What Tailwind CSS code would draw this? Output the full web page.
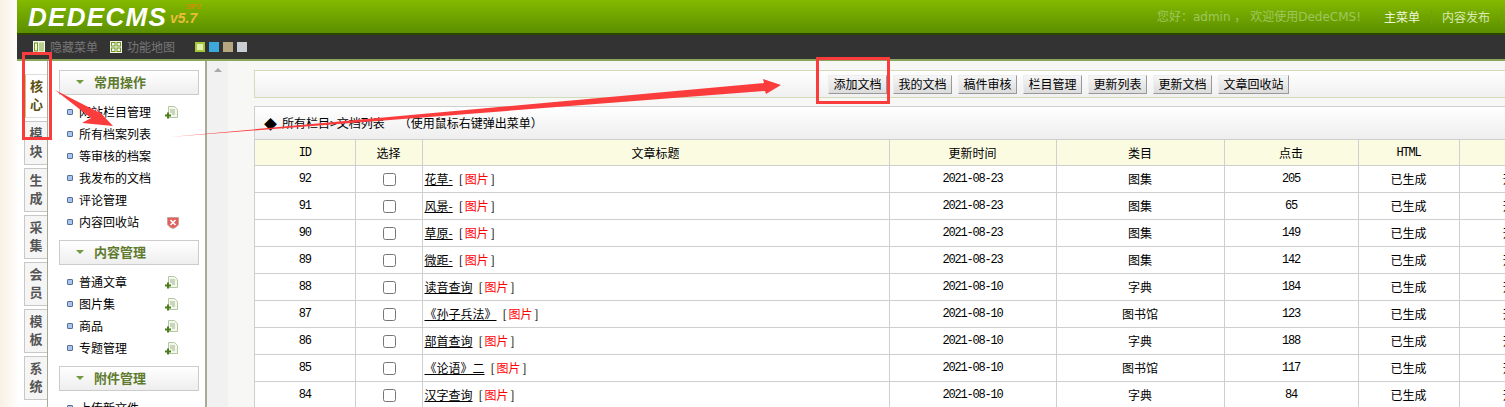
<!DOCTYPE html>
<html lang="zh-CN">
<head>
  <meta charset="UTF-8">
  <title>DedeCMS</title>
  <script src="https://cdn.jsdelivr.net/npm/@tailwindcss/browser@4"></script>
</head>
<body class="m-0 h-[407px] w-[1505px] overflow-hidden bg-white text-[12px] leading-none text-black [font-family:'Noto_Sans_CJK_SC',sans-serif]">
<div class="relative flex h-[407px] w-[1505px] overflow-hidden">

  <!-- left margin of the window -->
  <div class="h-full w-[17px] shrink-0 bg-gradient-to-r from-[#f8f0e4] to-[#fffdfa]"></div>

  <div class="flex h-full w-[1488px] shrink-0 flex-col">
    <!-- top bar -->
    <div class="flex h-[33px] shrink-0 items-center bg-gradient-to-b from-[#84ba00] to-[#5b8f00] pl-[11px]">
      <div class="relative w-[185px] text-white">
        <span class="text-[26px] font-black italic tracking-[1.300px] [font-family:'Liberation_Sans',sans-serif]">DEDECMS</span>
        <span class="absolute left-[142px] top-[7px] text-[14px] font-bold italic text-[#e8bd3a] [font-family:'Liberation_Sans',sans-serif]">v5.7</span>
        <span class="absolute left-[158px] top-[-1px] text-[8px] text-[#f07a10] [font-family:'Liberation_Sans',sans-serif]">SP2</span>
      </div>
      <div class="ml-auto flex items-center">
        <span class="text-[#9fc65e] [font-family:'DejaVu_Sans','Noto_Sans_CJK_SC',sans-serif]">您好：admin ， 欢迎使用DedeCMS!</span>
        <span class="ml-[23px] text-[#eef5dc]">主菜单</span>
        <span class="ml-[11px] h-[14px] w-px bg-[#6f9f1a]"></span>
        <span class="ml-[10px] text-[#dbe9b4]">内容发布</span>
        <span class="ml-[11px] mr-[3px] h-[14px] w-px bg-[#6f9f1a]"></span>
      </div>
    </div>

    <!-- dark menu bar -->
    <div class="flex h-[28px] shrink-0 items-center border-t-2 border-b-2 border-t-[#2c4600] border-b-[#8aa65a] bg-[#333333] pl-[16px] text-[#777777]">
      <svg class="h-[12px] w-[12px]" viewBox="0 0 12 12"><rect width="12" height="12" fill="#f2f2e8"/><rect x="1.5" y="2" width="3" height="8" fill="none" stroke="#6f9a1e"/><rect x="6" y="1.5" width="5" height="9" fill="#b7cf8a"/></svg>
      <span class="ml-[5px]">隐藏菜单</span>
      <svg class="ml-[12px] h-[12px] w-[12px]" viewBox="0 0 12 12"><rect width="12" height="12" fill="#f2f2e8"/><rect x="1.5" y="1.5" width="3.5" height="3.5" fill="none" stroke="#6f9a1e"/><rect x="7" y="1.5" width="3.5" height="3.5" fill="none" stroke="#6f9a1e"/><rect x="1.5" y="7" width="3.5" height="3.5" fill="none" stroke="#6f9a1e"/><rect x="7" y="7" width="3.5" height="3.5" fill="none" stroke="#6f9a1e"/></svg>
      <span class="ml-[5px]">功能地图</span>
      <span class="ml-[20px] h-[10px] w-[10px] border-2 border-[#a4c93a] bg-[#e4efb0]"></span>
      <span class="ml-[4px] h-[10px] w-[10px] bg-[#3da8dc]"></span>
      <span class="ml-[4px] h-[10px] w-[10px] bg-[#b8a680]"></span>
      <span class="ml-[4px] h-[10px] w-[10px] bg-[#c9ced3]"></span>
    </div>

    <div class="flex min-h-0 flex-1">
      <!-- vertical tabs -->
      <div class="flex w-[30px] shrink-0 flex-col items-end gap-[3px] bg-white pt-[13px]" id="tabs"></div>

      <!-- side menu -->
      <div class="h-full w-[160px] shrink-0 overflow-hidden border-r-2 border-l border-r-[#a8ab95] border-l-[#a8ab95] bg-white pl-[11px] pr-[6px] pt-[9px]" id="menu"></div>

      <!-- scroll strip -->
      <div class="flex w-[21px] shrink-0 justify-center bg-[#f1f1f1] pt-[7px]">
        <span class="h-0 w-0 border-x-[4px] border-b-[4px] border-x-transparent border-b-[#a8a8a8]"></span>
      </div>

      <!-- content -->
      <div class="min-w-0 flex-1 overflow-hidden bg-[#f7f8f5] pl-[26px] pt-[9px]">
        <div class="flex h-[28px] items-center gap-[6px] border-y border-l border-[#d3dcb8] bg-gradient-to-b from-white to-[#f0f0f0] pl-[573px]">
          <button class="h-[19px] w-[59px] border border-[#eeeeee] border-r-[#999999] border-b-[#999999] bg-gradient-to-b from-[#f6f6f6] to-[#dcdcdc]">添加文档</button>
          <button class="h-[19px] w-[59px] border border-[#eeeeee] border-r-[#999999] border-b-[#999999] bg-gradient-to-b from-[#f6f6f6] to-[#dcdcdc]">我的文档</button>
          <button class="h-[19px] w-[59px] border border-[#eeeeee] border-r-[#999999] border-b-[#999999] bg-gradient-to-b from-[#f6f6f6] to-[#dcdcdc]">稿件审核</button>
          <button class="h-[19px] w-[59px] border border-[#eeeeee] border-r-[#999999] border-b-[#999999] bg-gradient-to-b from-[#f6f6f6] to-[#dcdcdc]">栏目管理</button>
          <button class="h-[19px] w-[59px] border border-[#eeeeee] border-r-[#999999] border-b-[#999999] bg-gradient-to-b from-[#f6f6f6] to-[#dcdcdc]">更新列表</button>
          <button class="h-[19px] w-[59px] border border-[#eeeeee] border-r-[#999999] border-b-[#999999] bg-gradient-to-b from-[#f6f6f6] to-[#dcdcdc]">更新文档</button>
          <button class="h-[19px] w-[71px] border border-[#eeeeee] border-r-[#999999] border-b-[#999999] bg-gradient-to-b from-[#f6f6f6] to-[#dcdcdc]">文章回收站</button>
        </div>

        <div class="mt-[8px] w-[1340px] border-t border-l border-[#cfcfcf]">
          <div class="flex h-[32px] items-center bg-gradient-to-b from-white to-[#eeeeee] pl-[9px]">
            <span class="text-[13px]">◆</span>
            <span class="ml-[5px]">所有栏目&gt;文档列表</span>
            <span class="ml-[14px]">（使用鼠标右键弹出菜单）</span>
          </div>
          <table class="w-[1339px] table-fixed border-collapse">
            <colgroup>
              <col class="w-[100px]"><col class="w-[67px]"><col class="w-[467px]"><col class="w-[167px]"><col class="w-[168px]"><col class="w-[134px]"><col class="w-[101px]"><col class="w-[135px]">
            </colgroup>
            <thead>
              <tr class="h-[26px] border-y border-[#cfcfcf] bg-[#fbfbe2] text-center">
                <th class="border-r border-[#cfcfcf] font-normal tracking-[-1.200px] [font-family:'Liberation_Mono',monospace]">ID</th>
                <th class="border-r border-[#cfcfcf] font-normal">选择</th>
                <th class="border-r border-[#cfcfcf] font-normal">文章标题</th>
                <th class="border-r border-[#cfcfcf] font-normal">更新时间</th>
                <th class="border-r border-[#cfcfcf] font-normal">类目</th>
                <th class="border-r border-[#cfcfcf] font-normal">点击</th>
                <th class="border-r border-[#cfcfcf] font-normal tracking-[-1.200px] [font-family:'Liberation_Mono',monospace]">HTML</th>
                <th class="font-normal">权限</th>
              </tr>
            </thead>
            <tbody id="rows"></tbody>
          </table>
        </div>
      </div>
    </div>
  </div>

  <!-- red annotations drawn on the screenshot -->
  <svg class="pointer-events-none absolute left-0 top-0 h-[407px] w-[1505px]" viewBox="0 0 1505 407">
    <rect x="23.5" y="53.5" width="27" height="85" fill="none" stroke="#fa3c3c" stroke-width="3"/>
    <rect x="817.5" y="58.5" width="71" height="44" fill="none" stroke="#fa3c3c" stroke-width="3"/>
    <polygon points="55,90 98,112 95,107 113,126 82,123 91,118" fill="#fa3c3c"/>
    <polygon points="170,137 764,83 763,79 781,85 766,94 765,91" fill="#fa3c3c"/>
  </svg>
</div>

<script>
  const tabs = ["核心", "模块", "生成", "采集", "会员", "模板", "系统"];
  const menu = [
    { title: "常用操作", items: [["网站栏目管理", "add"], ["所有档案列表"], ["等审核的档案"], ["我发布的文档"], ["评论管理"], ["内容回收站", "del"]] },
    { title: "内容管理", items: [["普通文章", "add"], ["图片集", "add"], ["商品", "add"], ["专题管理", "add"]] },
    { title: "附件管理", items: [["上传新文件"]] }
  ];
  const rows = [
    [92, "花草-", "2021-08-23", "图集", 205],
    [91, "风景-", "2021-08-23", "图集", 65],
    [90, "草原-", "2021-08-23", "图集", 149],
    [89, "微距-", "2021-08-23", "图集", 142],
    [88, "读音查询", "2021-08-10", "字典", 184],
    [87, "《孙子兵法》", "2021-08-10", "图书馆", 123],
    [86, "部首查询", "2021-08-10", "字典", 188],
    [85, "《论语》二", "2021-08-10", "图书馆", 117],
    [84, "汉字查询", "2021-08-10", "字典", 84]
  ];

  const addIcon = `<svg class="ml-auto mr-[21px] h-[13px] w-[13px]" viewBox="0 0 13 13"><path d="M3.5 .5h6l3 3v8h-9z" fill="#f4f7ee" stroke="#b4c8a0"/><path d="M5 4h5M5 6h5M7 8h3" stroke="#9db58a"/><path d="M0 9.500h6M3 6.500v6" stroke="#4c7d1c" stroke-width="2"/></svg>`;
  const delIcon = `<svg class="ml-auto mr-[20px] h-[13px] w-[12px]" viewBox="0 0 12 13"><path d="M.5 1.500h11v6c0 2.500-3 4-5.500 5C3.500 11.500.5 10 .5 7.500z" fill="#e2605a" stroke="#c9a09a"/><path d="M3.500 4l5 5M8.500 4l-5 5" stroke="#fff" stroke-width="1.600"/></svg>`;

  document.getElementById("tabs").innerHTML = tabs.map((t, i) => `
    <div class="flex h-[44px] w-[23px] shrink-0 flex-col items-center justify-center gap-[5px] border-y border-l pb-[3px] text-[13px] font-bold ${i === 0 ? "border-[#dddddd] border-l-2 border-l-[#b4cf7c] bg-white text-[#5c4f10]" : "border-[#c8c8c8] bg-[#f5f5f5] text-[#555555]"}">
      <span>${t[0]}</span><span>${t[1]}</span>
    </div>`).join("");

  document.getElementById("menu").innerHTML = menu.map(g => `
    <div class="mb-[6px] flex h-[25px] items-center border border-[#cccccc] bg-gradient-to-b from-white to-[#eeeeee] pb-[2px] pl-[16px]">
      <span class="h-0 w-0 border-x-[4px] border-t-[4px] border-x-transparent border-t-[#6f9a3e]"></span>
      <span class="ml-[10px] text-[13px] font-bold text-[#5e7a2d]">${g.title}</span>
    </div>
    <ul class="mb-[7px]">
      ${g.items.map(it => `
        <li class="flex h-[22px] items-center pl-[8px]">
          <span class="h-[6px] w-[6px] rounded-[1px] border border-[#5a6f94] bg-[#a8c4f0]"></span>
          <span class="ml-[6px]">${it[0]}</span>
          ${it[1] === "add" ? addIcon : it[1] === "del" ? delIcon : ""}
        </li>`).join("")}
    </ul>`).join("");

  document.getElementById("rows").innerHTML = rows.map(r => `
    <tr class="h-[27px] border-b border-[#cfcfcf] bg-white text-center">
      <td class="border-r border-[#cfcfcf] tracking-[-1.200px] [font-family:'Liberation_Mono',monospace]">${r[0]}</td>
      <td class="border-r border-[#cfcfcf] pl-[1px]"><input type="checkbox" class="m-0 h-[13px] w-[13px] align-middle"></td>
      <td class="border-r border-[#cfcfcf] pl-[2px] text-left"><span class="underline">${r[1]}</span><span class="ml-[6px]">[<span class="mx-[2px] text-[#ff0000]">图片</span>]</span></td>
      <td class="border-r border-[#cfcfcf] tracking-[-1.200px] [font-family:'Liberation_Mono',monospace]">${r[2]}</td>
      <td class="border-r border-[#cfcfcf]">${r[3]}</td>
      <td class="border-r border-[#cfcfcf] tracking-[-1.200px] [font-family:'Liberation_Mono',monospace]">${r[4]}</td>
      <td class="border-r border-[#cfcfcf]">已生成</td>
      <td>开放浏览</td>
    </tr>`).join("");
</script>
</body>
</html>
